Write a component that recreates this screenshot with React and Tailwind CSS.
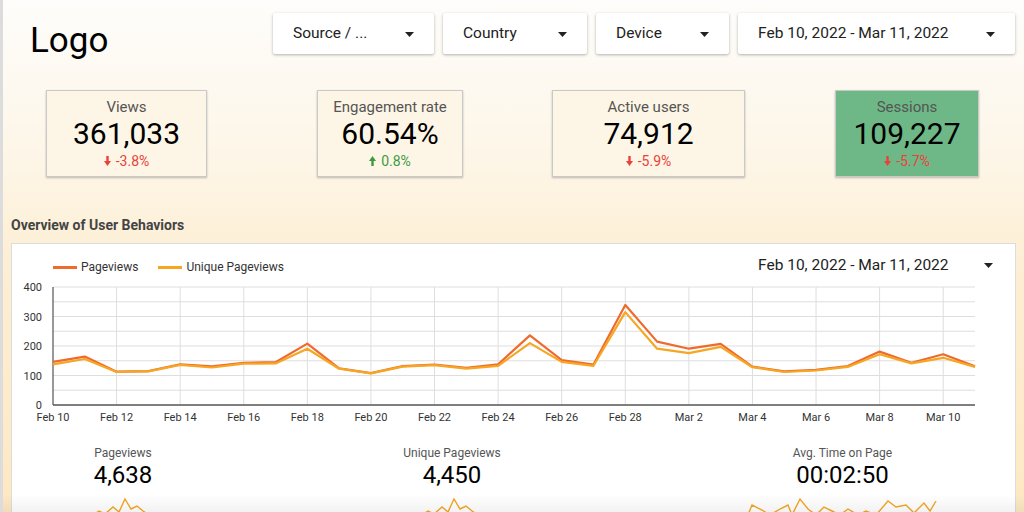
import React from 'react';

const filters = [
  { label: 'Source / ...', w: 'w-[161px]', textW: 'w-[110px]' },
  { label: 'Country', w: 'w-[144px]', textW: 'w-[96px]' },
  { label: 'Device', w: 'w-[133px]', textW: 'w-[86px]' },
  { label: 'Feb 10, 2022 - Mar 11, 2022', w: 'w-[277px]', textW: 'w-[196px]' },
];

const kpis = [
  { label: 'Views', value: '361,033', delta: '-3.8%', up: false, cls: 'ml-[43px] w-[161px] bg-[#fdf6e6]' },
  { label: 'Engagement rate', value: '60.54%', delta: '0.8%', up: true, cls: 'ml-[110px] w-[146px] bg-[#fdf6e6]' },
  { label: 'Active users', value: '74,912', delta: '-5.9%', up: false, cls: 'ml-[89px] w-[193px] bg-[#fdf6e6]' },
  { label: 'Sessions', value: '109,227', delta: '-5.7%', up: false, cls: 'ml-[90px] w-[144px] bg-[#6db886]' },
];

const pageviews = [146, 164, 113, 115, 138, 131, 143, 145, 208, 124, 108, 132, 137, 126, 138, 236, 152, 137, 339, 215, 191, 207, 130, 114, 119, 132, 181, 143, 172, 131];
const unique = [138, 156, 112, 114, 136, 127, 140, 141, 191, 123, 107, 130, 135, 123, 133, 210, 146, 133, 315, 191, 176, 197, 128, 112, 117, 129, 172, 141, 160, 129];
const xLabels = ['Feb 10', 'Feb 12', 'Feb 14', 'Feb 16', 'Feb 18', 'Feb 20', 'Feb 22', 'Feb 24', 'Feb 26', 'Feb 28', 'Mar 2', 'Mar 4', 'Mar 6', 'Mar 8', 'Mar 10'];

const X0 = 41;
const X1 = 963;
const STEP = (X1 - X0) / 29;
const Y0 = 125;
const SCALE = 0.295;

const px = (i) => X0 + i * STEP;
const py = (v) => Y0 - v * SCALE;
const toPoints = (arr) => arr.map((v, i) => `${px(i).toFixed(1)},${py(v).toFixed(1)}`).join(' ');

const Caret = () => (
  <svg width="9" height="5" viewBox="0 0 9 5" className="shrink-0">
    <path d="M0 0h9L4.5 5z" fill="#222" />
  </svg>
);

const Arrow = ({ up }) => (
  <svg width="7" height="10" viewBox="0 0 7 10" className={up ? 'rotate-180' : ''}>
    <rect x="2.3" y="0" width="2.4" height="5.5" fill="currentColor" />
    <path d="M0 5h7L3.5 10z" fill="currentColor" />
  </svg>
);

const Spark = ({ points, w }) => (
  <svg width={w} height="18" viewBox={`0 0 ${w} 18`} className="block">
    <polyline points={points} fill="none" stroke="#f5a623" strokeWidth="1.4" strokeLinejoin="miter" />
  </svg>
);

export default function App() {
  return (
    <div className="relative h-[512px] w-[1024px] overflow-hidden border-l-[3px] border-[#dcdcdc] bg-[linear-gradient(180deg,#fefdfb_0%,#fdf6e8_30%,#fdefd5_50%,#fde8c2_100%)] font-['Roboto','Liberation_Sans',sans-serif]">
      {/* header */}
      <div className="flex h-[54px] items-center pt-[13px]">
        <div className="h-[41px] w-[270px] pl-[27px] text-[35px] leading-[55px] text-black">Logo</div>
        <div className="flex gap-[9px]">
          {filters.map((f) => (
            <div key={f.label} className={`${f.w} flex h-[41px] items-center justify-between rounded-[2px] bg-white pl-[20px] pr-[20px] pt-[1px] shadow-[0_1px_3px_rgba(0,0,0,0.3)]`}>
              <span className={`${f.textW} overflow-hidden whitespace-nowrap text-[15.5px] text-[#222]`}>{f.label}</span>
              <Caret />
            </div>
          ))}
        </div>
      </div>

      {/* kpi cards */}
      <div className="mt-[36px] flex">
        {kpis.map((k) => (
          <div key={k.label} className={`${k.cls} flex h-[87px] flex-col items-center border border-[#c9c9c9] pt-[6px] shadow-[0_1px_2px_rgba(0,0,0,0.25)]`}>
            <div className="text-[15px] leading-[20px] text-[#555]">{k.label}</div>
            <div className="text-[30px] leading-[34px] text-black">{k.value}</div>
            <div className={`mt-[2px] flex items-center gap-[5px] text-[14px] leading-[16px] ${k.up ? 'text-[#3c9a3f]' : 'text-[#e8433a]'}`}>
              <Arrow up={k.up} />
              <span>{k.delta}</span>
            </div>
          </div>
        ))}
      </div>

      <div className="ml-[8px] mt-[39px] text-[14px] font-bold leading-[18px] text-[#444]">Overview of User Behaviors</div>

      {/* chart card */}
      <div className="relative ml-[8px] mt-[9px] h-[300px] w-[1005px] border border-[#dcdcdc] bg-white">
        <div className="flex h-[36px] items-end">
          <div className="flex items-center gap-[4px] pl-[41px] pb-[4px]">
            <span className="h-[3px] w-[24px] bg-[#ee6b2d]" />
            <span className="text-[12px] text-[#333]">Pageviews</span>
            <span className="ml-[16px] h-[3px] w-[24px] bg-[#f6a623]" />
            <span className="text-[12px] text-[#333]">Unique Pageviews</span>
          </div>
          <div className="ml-auto flex items-center self-start pr-[22px] pt-[10px]">
            <span className="w-[226px] whitespace-nowrap text-[15.5px] text-[#222]">Feb 10, 2022 - Mar 11, 2022</span>
            <Caret />
          </div>
        </div>

        <svg width="1003" height="146" viewBox="0 0 1003 146" className="block">
          {[50, 100, 150, 200, 250, 300, 350, 400].map((v) => (
            <line key={v} x1={X0} x2={X1} y1={py(v)} y2={py(v)} stroke="#dedede" strokeWidth="1" />
          ))}
          {xLabels.map((_, j) => (j === 0 ? null : (
            <line key={j} x1={px(j * 2)} x2={px(j * 2)} y1={py(400)} y2={Y0} stroke="#dedede" strokeWidth="1" />
          )))}
          <line x1={X0} x2={X0} y1={py(400)} y2={Y0} stroke="#333" strokeWidth="1" />
          <line x1={X0} x2={X1} y1={Y0} y2={Y0} stroke="#555" strokeWidth="1.5" />
          {[0, 100, 200, 300, 400].map((v) => (
            <text key={v} x="30" y={py(v) + 4} textAnchor="end" fontSize="11" fill="#333" fontFamily="Roboto, sans-serif">{v}</text>
          ))}
          {xLabels.map((l, j) => (
            <text key={l} x={px(j * 2)} y="141" textAnchor="middle" fontSize="11" fill="#333" fontFamily="Roboto, sans-serif">{l}</text>
          ))}
          <polyline points={toPoints(pageviews)} fill="none" stroke="#ee6b2d" strokeWidth="2.2" strokeLinejoin="round" />
          <polyline points={toPoints(unique)} fill="none" stroke="#f6a623" strokeWidth="2.2" strokeLinejoin="round" />
        </svg>

        {/* scorecards */}
        <div className="mt-[20px] flex">
          <div className="flex w-[222px] flex-col items-center">
            <div className="text-[12px] leading-[14px] text-[#555]">Pageviews</div>
            <div className="text-[24px] leading-[30px] text-black">4,638</div>
            <div className="mt-[7px]">
              <Spark w={60} points="0,18 6,14 12,17 20,10 26,15 32,2 38,12 44,9 50,14 56,18" />
            </div>
          </div>
          <div className="flex w-[436px] flex-col items-center">
            <div className="text-[12px] leading-[14px] text-[#555]">Unique Pageviews</div>
            <div className="text-[24px] leading-[30px] text-black">4,450</div>
            <div className="mt-[7px]">
              <Spark w={60} points="0,18 6,14 12,17 20,10 26,15 32,2 38,12 44,9 50,14 56,18" />
            </div>
          </div>
          <div className="flex flex-1 flex-col items-center">
            <div className="text-[12px] leading-[14px] text-[#555]">Avg. Time on Page</div>
            <div className="text-[24px] leading-[30px] text-black">00:02:50</div>
            <div className="mt-[7px]">
              <Spark w={190} points="0,18 4,8 14,13 22,18 32,12 40,8 44,18 52,2 60,12 68,18 76,10 84,14 92,18 100,12 110,18 118,14 128,18 140,4 148,10 158,8 166,16 176,6 182,14 188,4" />
            </div>
          </div>
        </div>
      </div>

      <div className="pointer-events-none absolute inset-x-0 bottom-0 h-[18px] bg-[linear-gradient(180deg,rgba(0,0,0,0)_0%,rgba(0,0,0,0.05)_100%)]" />
    </div>
  );
}
